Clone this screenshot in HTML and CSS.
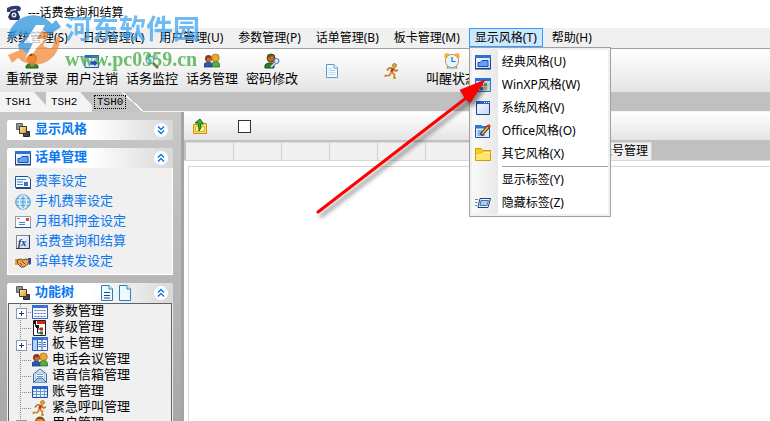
FILE: index.html
```html
<!DOCTYPE html>
<html lang="zh-CN">
<head>
<meta charset="utf-8">
<meta name="viewport" content="width=device-width, initial-scale=1.0">
<title>话费查询和结算</title>
<link rel="stylesheet" href="styles.css">
</head>
<body>
<!-- icons -->
<svg class="sprite" aria-hidden="true">
  <defs>
    <linearGradient id="gWin" x1="0" y1="0" x2="1" y2="1"><stop offset="0" stop-color="#fff"/><stop offset="1" stop-color="#c3d3f0"/></linearGradient>
    <linearGradient id="gGold" x1="0" y1="0" x2="1" y2="1"><stop offset="0" stop-color="#fff0b0"/><stop offset="1" stop-color="#d8932a"/></linearGradient>
  </defs>
  <symbol id="i-phone" viewBox="0 0 16 16">
    <path d="M1 3Q6 0 13 1L15 3L14 6L11 6L10 4L5 5L4 7L1 7Z" fill="#2f3c70"/>
    <path d="M5 6L11 5L14 12L13 15L4 15L2 12Z" fill="#26305c"/>
    <circle cx="8" cy="10" r="2.5" fill="#dde4f4"/><circle cx="8" cy="10" r="1" fill="#26305c"/>
  </symbol>
  <symbol id="i-person" viewBox="0 0 16 16">
    <path d="M2 15V13Q4 11 6 10H10Q12 11 14 13V15Z" fill="#2f8f2c" stroke="#176018"/>
    <path d="M6 9H10V12L8 14L6 12Z" fill="#c8781a"/>
    <circle cx="8" cy="5.5" r="4.5" fill="#d98c23" stroke="#8b4a0a"/>
    <path d="M4 5Q4 1 8 1Q12 1 12 5L10 3L5 3Z" fill="#8b4a0a"/>
  </symbol>
  <symbol id="i-logout" viewBox="0 0 16 16">
    <path d="M1 2.5H14.500V14.500H1Z" fill="url(#gWin)" stroke="#2457a8"/>
    <path d="M1 2H15V5H1Z" fill="#2f62c4"/>
    <path d="M6 8H10V6L14 10L10 14V12H6Z" fill="#1f4fc0" stroke="#fff" stroke-width=".5"/>
  </symbol>
  <symbol id="i-monitor" viewBox="0 0 16 16">
    <circle cx="4.500" cy="4" r="3" fill="#7ec46d"/><circle cx="11" cy="4" r="3" fill="#b4cdb9"/>
    <circle cx="6" cy="7" r="4" fill="#cfe6f8" stroke="#6d9cc2"/>
    <path d="M9 10L14 15" stroke="#7a6a5a" stroke-width="2.500"/>
  </symbol>
  <symbol id="i-users" viewBox="0 0 16 16">
    <path d="M0 14V11Q2 9 4.500 9Q7 9 8 11V14Z" fill="#2d56b8" stroke="#16306e" stroke-width=".7"/>
    <circle cx="4.500" cy="5.500" r="3.500" fill="#8c3b1c"/><path d="M3 5H7V8L5 9L3 8Z" fill="#bd6a35"/>
    <path d="M8 14V10Q10 8 12 8Q15 9 15.500 11V14Z" fill="#4fb04a" stroke="#1d6b1f" stroke-width=".7"/>
    <circle cx="11.500" cy="4.800" r="3.800" fill="#eaa832" stroke="#a4690c" stroke-width=".7"/>
  </symbol>
  <symbol id="i-key" viewBox="0 0 16 16">
    <path d="M1 15V12Q3 10 5 10H10V15Z" fill="#2e7d2a" stroke="#155016"/>
    <circle cx="7" cy="5" r="4" fill="#b86d1f" stroke="#6a3a0a"/>
    <path d="M3 5Q3 1 7 1Q11 1 11 4L8 3Z" fill="#59571b"/>
    <circle cx="12.500" cy="8" r="2.500" fill="#d9e9fb" stroke="#44699c"/>
    <path d="M11 10L7 14" stroke="#44699c" stroke-width="3"/><path d="M11 10L7 14" stroke="#d9e9fb" stroke-width="1.500"/>
  </symbol>
  <symbol id="i-page" viewBox="0 0 16 16">
    <path d="M2.500 1.500H10L13.500 5V14.500H2.500Z" fill="#f2f9ff" stroke="#5b9bd5"/>
    <path d="M10 1.500V5H13.500" fill="#fff" stroke="#5b9bd5"/>
    <path d="M4.500 5.500H8M4.500 7.500H11.500M4.500 9.500H11.500M4.500 11.500H11.500" stroke="#bcd6ec"/>
  </symbol>
  <symbol id="i-run" viewBox="0 0 16 16">
    <circle cx="10.500" cy="2.500" r="2" fill="#e9a43a" stroke="#8f5200" stroke-width=".6"/>
    <path d="M9 5L7.500 9" stroke="#d32d1f" stroke-width="3"/>
    <path d="M8 5H5L3 7.500M9.500 5.500L11.500 8L14 7" stroke="#b87410" stroke-width="1.500" fill="none"/>
    <path d="M7.500 9L10.500 11.500L10 15H12M7 9.500L5.500 12.500L1.500 12.500V14" stroke="#c98718" stroke-width="1.700" fill="none"/>
  </symbol>
  <symbol id="i-clock" viewBox="0 0 16 16">
    <circle cx="3" cy="3" r="2.700" fill="#f7b02d"/><circle cx="13" cy="3" r="2.700" fill="#f7b02d"/>
    <path d="M3 15L5 12M13 15L11 12" stroke="#c77b16" stroke-width="1.500"/>
    <circle cx="8" cy="8" r="6.600" fill="#e6f4ff" stroke="#e08c42"/>
    <path d="M8 4V8.500H11.500" fill="none" stroke="#1677b8" stroke-width="1.200"/>
    <path d="M3 15H13" stroke="#5fb0e0"/>
  </symbol>
  <symbol id="i-classic" viewBox="0 0 16 16">
    <path d="M.5 1.500H15.500V14.500H.5Z" fill="url(#gWin)" stroke="#1d4690"/>
    <path d="M0 1H16V4H0Z" fill="#2e6fd8"/>
    <path d="M3 12.500V8.500H5L7 6.500H13V12.500Z" fill="#5aa4f2" stroke="#1553b6"/>
    <path d="M0 15H16" stroke="#16345f"/>
  </symbol>
  <symbol id="i-winxp" viewBox="0 0 16 16">
    <path d="M.5 1.500H15.500V14.500H.5Z" fill="#c6daf5" stroke="#2e6fd8"/>
    <path d="M0 1H16V4H0Z" fill="#2e6fd8"/>
    <path d="M5 6H8V9H5Z" fill="#e5502a"/><path d="M9 6H12V9H9Z" fill="#5eae34"/>
    <path d="M5 10H8V13H5Z" fill="#3f73cf"/><path d="M9 10H12V13H9Z" fill="#f0bd26"/>
  </symbol>
  <symbol id="i-window" viewBox="0 0 16 16">
    <path d="M1.500 1.500H14.500V14.500H1.500Z" fill="url(#gWin)" stroke="#1d4690"/>
    <path d="M1 1H15V4H1Z" fill="#2a5fc4"/><path d="M9 2.500H10M11 2.500H12M13 2.500H14" stroke="#fff"/>
  </symbol>
  <symbol id="i-office" viewBox="0 0 16 16">
    <path d="M.5 2.500H6L7 4H14.500V14.500H.5Z" fill="#dcebfb" stroke="#1c58a4"/>
    <path d="M0 2H6L7 3H15V5.500H0Z" fill="#2d78cc"/>
    <path d="M2.500 8H9M2.500 10H7M2.500 12H10" stroke="#2d78cc"/>
    <path d="M6 12L14 3" stroke="#47301a" stroke-width="3.400"/><path d="M7 11L13 4" stroke="#f7bf2e" stroke-width="1.800"/><path d="M13 4L15 2" stroke="#d83a24" stroke-width="3"/>
  </symbol>
  <symbol id="i-folder" viewBox="0 0 16 16">
    <path d="M.5 2.500H6L8 4.500H15.500V14.500H.5Z" fill="#f9c928" stroke="#d69a0e"/>
    <path d="M1 9.500L7 8.500L9 6.500H15V14H1Z" fill="#ffe567"/>
    <path d="M1 9.500L7 8.500L9 6.500H15" fill="none" stroke="#fff6b8"/>
  </symbol>
  <symbol id="i-hide" viewBox="0 0 16 16">
    <path d="M5 3.500H15.500L13 12.500H3Z" fill="#f4f8ff" stroke="#1f3f77"/>
    <path d="M6 5.500H13.500L12 10.500H5Z" fill="#a5cdf5" stroke="#46719f"/>
    <path d="M0 4.500H3M0 7.500H2.500M0 10.500H2" stroke="#69829f"/>
  </symbol>
  <symbol id="i-stack" viewBox="0 0 16 16">
    <path d="M1.500 1.500H7.500V7.500H1.500Z" fill="#8d95a3" stroke="#59606c"/>
    <path d="M8.500 9.500H14.500V14.500H8.500Z" fill="#3f4550" stroke="#23272f"/>
    <path d="M4.500 4.500H11.500V11.500H4.500Z" fill="url(#gGold)" stroke="#4a3517"/>
  </symbol>
  <symbol id="i-card" viewBox="0 0 16 16">
    <path d="M.5 2.500H13L15.500 5V13.500H.5Z" fill="#f4f9ff" stroke="#245089"/>
    <path d="M2 5.500H11M2 8H8M2 10.500H8" stroke="#3b86d6"/><path d="M9 8H13V12H9Z" fill="#3a71c4"/>
    <path d="M1 14.500H16" stroke="#3c4656"/>
  </symbol>
  <symbol id="i-globe" viewBox="0 0 16 16">
    <circle cx="8" cy="8" r="7.300" fill="#b6dcf5" stroke="#4f99cf"/>
    <path d="M8 1V15M1 8H15M2 4.500H14M2 11.500H14" stroke="#4f99cf" stroke-width=".8"/>
    <ellipse cx="8" cy="8" rx="3.500" ry="7" fill="none" stroke="#fff"/>
  </symbol>
  <symbol id="i-mail" viewBox="0 0 16 16">
    <path d="M.5 2.500H15.500V13.500H.5Z" fill="#fdfdff" stroke="#8f9cb5"/>
    <path d="M0 13.500H16" stroke="#2c4c80"/><path d="M11 4H14V7H11Z" fill="#df4a25"/>
    <path d="M2 4.500H5" stroke="#e26a4a"/><path d="M4 8.500H10M4 10.500H10" stroke="#3b86d6"/>
  </symbol>
  <symbol id="i-hands" viewBox="0 0 16 16">
    <path d="M0 5L3 5L5 11L0 11Z" fill="#e8a53c"/><path d="M13 4H16V10L14 11Z" fill="#2548b8"/>
    <path d="M2 6L6 5L8 6L11 5L14 6L13 10L9 13H6L3 10Z" fill="#e6a65a" stroke="#83450f"/>
    <path d="M7 7L10 10M5 9L7 11" stroke="#83450f"/>
  </symbol>
  <symbol id="i-doc" viewBox="0 0 14 18">
    <path d="M1.500 1.500H9L12.500 5V16.500H1.500Z" fill="#eef8ff" stroke="#2b80b8"/>
    <path d="M9 1.500V5H12.500" fill="#fff" stroke="#2b80b8"/>
    <path d="M4 8.500H10M4 11.500H10M4 14H10" stroke="#174d7d"/>
  </symbol>
  <symbol id="i-blank" viewBox="0 0 14 18">
    <path d="M1.500 1.500H9L12.500 5V16.500H1.500Z" fill="#eef8ff" stroke="#2b80b8"/>
    <path d="M9 1.500V5H12.500" fill="#fff" stroke="#2b80b8"/>
  </symbol>
  <symbol id="i-up" viewBox="0 0 14 14">
    <circle cx="7" cy="7" r="7" fill="#fff"/>
    <path d="M4 6.500L7 3.500L10 6.500M4 10.500L7 7.500L10 10.500" fill="none" stroke="#0a74e8" stroke-width="1.400"/>
  </symbol>
  <symbol id="i-down" viewBox="0 0 14 14">
    <circle cx="7" cy="7" r="7" fill="#fff"/>
    <path d="M4 3.500L7 6.500L10 3.500M4 7.500L7 10.500L10 7.500" fill="none" stroke="#0a74e8" stroke-width="1.400"/>
  </symbol>
  <symbol id="i-grid" viewBox="0 0 16 16">
    <path d="M.5 1.500H15.500V14.500H.5Z" fill="#f4f8ff" stroke="#2a5db0"/><path d="M0 1H16V4H0Z" fill="#2e6fd8"/><path d="M12 2.500H14" stroke="#f2683a"/>
    <path d="M2.500 6.500H14M2.500 9.500H14M2.500 12.500H14" stroke="#5c6fae" stroke-dasharray="2 1"/>
  </symbol>
  <symbol id="i-level" viewBox="0 0 16 16">
    <path d="M1.500 .5H13.500V15.500H1.500Z" fill="#fff" stroke="#222"/><path d="M5 1H13V4H5Z" fill="#e2231a"/>
    <path d="M3.500 2V6.500H7M5.500 6.500V13H9M5.500 9H9" stroke="#111" fill="none"/>
    <path d="M1 1H4V4H1Z M4 5H7V8H4Z" fill="#111"/><path d="M8 7.500H11V10.500H8Z" fill="#c2201a"/><path d="M8 11.500H11V14.500H8Z" fill="#1e7c2c"/>
  </symbol>
  <symbol id="i-board" viewBox="0 0 16 16">
    <path d="M.5 1.500H15.500V14.500H.5Z" fill="#f4f8ff" stroke="#2a5db0"/><path d="M0 1H16V4H0Z" fill="#2e6fd8"/><path d="M12 2.500H14" stroke="#f2683a"/>
    <path d="M1 4H5V14H1Z" fill="#b4d2f5"/><path d="M5.500 4V14M10 4V14" stroke="#2a5db0"/>
    <path d="M6.500 6.500H9M6.500 8.500H9M6.500 10.500H9M11 6.500H14M11 8.500H14M11 10.500H14" stroke="#467bc4"/>
  </symbol>
  <symbol id="i-letter" viewBox="0 0 16 16">
    <path d="M1.500 6L8 1L14.500 6V14.500H1.500Z" fill="#cfe2f5" stroke="#4a6f9d"/>
    <path d="M4 5H12V11H4Z" fill="#fff" stroke="#8ca6c4" stroke-width=".6"/><path d="M5 6.500H11M5 8.500H11" stroke="#5b9bd5"/>
    <path d="M1.500 14.500L6 10H10L14.500 14.500" fill="#a5c6e8" stroke="#4a6f9d"/>
  </symbol>
  <symbol id="i-table" viewBox="0 0 16 16">
    <path d="M.5 2.500H15.500V13.500H.5Z" fill="#e8f1fd" stroke="#1d4a94"/><path d="M0 2H16V5H0Z" fill="#2763c6"/>
    <path d="M4.500 5V13M8.500 5V13M12.500 5V13M1 7.500H15M1 10.500H15" stroke="#6d97d4"/>
  </symbol>
  <symbol id="i-export" viewBox="0 0 16 16">
    <path d="M1.500 6.500H6L7 5.500H14.500V15.500H1.500Z" fill="#fbe36b" stroke="#c4930f"/><path d="M3.500 8.500H12.500V13.500H3.500Z" fill="#fff09b" stroke="#dcae2c"/>
    <path d="M7 13Q10 10 8.500 6H11.500L8 1L3 5H6Q7 9 7 13Z" fill="#35b52c" stroke="#146d15"/>
  </symbol>
</svg>

<header class="titlebar">
  <svg class="icon"><use href="#i-phone"/></svg>
  <span>---话费查询和结算</span>
</header>

<nav class="menubar">
  <button class="menu">系统管理(S)</button>
  <button class="menu">日志管理(L)</button>
  <button class="menu">用户管理(U)</button>
  <button class="menu">参数管理(P)</button>
  <button class="menu">话单管理(B)</button>
  <button class="menu">板卡管理(M)</button>
  <div class="menu-open">
    <button class="menu active" aria-expanded="true">显示风格(T)</button>
    <div class="dropdown">
      <button class="option"><svg class="icon"><use href="#i-classic"/></svg>经典风格(U)</button>
      <button class="option"><svg class="icon"><use href="#i-winxp"/></svg>WinXP风格(W)</button>
      <button class="option"><svg class="icon"><use href="#i-window"/></svg>系统风格(V)</button>
      <button class="option"><svg class="icon"><use href="#i-office"/></svg>Office风格(O)</button>
      <button class="option"><svg class="icon"><use href="#i-folder"/></svg>其它风格(X)</button>
      <hr>
      <button class="option"><svg class="icon"></svg>显示标签(Y)</button>
      <button class="option"><svg class="icon"><use href="#i-hide"/></svg>隐藏标签(Z)</button>
    </div>
  </div>
  <button class="menu">帮助(H)</button>
</nav>

<div class="toolbar">
  <button class="tool"><svg class="icon"><use href="#i-person"/></svg>重新登录</button>
  <button class="tool"><svg class="icon"><use href="#i-logout"/></svg>用户注销</button>
  <button class="tool"><svg class="icon"><use href="#i-monitor"/></svg>话务监控</button>
  <button class="tool"><svg class="icon"><use href="#i-users"/></svg>话务管理</button>
  <button class="tool"><svg class="icon"><use href="#i-key"/></svg>密码修改</button>
  <button class="tool" aria-label="文档"><svg class="icon"><use href="#i-page"/></svg></button>
  <button class="tool" aria-label="退出"><svg class="icon"><use href="#i-run"/></svg></button>
  <button class="tool"><svg class="icon"><use href="#i-clock"/></svg>叫醒状态</button>
</div>

<div class="tabs">
  <button class="tab">TSH1</button>
  <button class="tab">TSH2</button>
  <button class="tab selected"><span>TSH0</span></button>
</div>

<div class="workspace">
  <aside class="sidebar">
    <section class="panel">
      <h2 class="panel-head"><svg class="icon"><use href="#i-stack"/></svg>显示风格
        <button class="fold" aria-label="展开"><svg><use href="#i-down"/></svg></button></h2>
    </section>
    <section class="panel">
      <h2 class="panel-head"><svg class="icon"><use href="#i-classic"/></svg>话单管理
        <button class="fold" aria-label="收起"><svg><use href="#i-up"/></svg></button></h2>
      <div class="links">
        <a href="#"><svg class="icon"><use href="#i-card"/></svg>费率设定</a>
        <a href="#"><svg class="icon"><use href="#i-globe"/></svg>手机费率设定</a>
        <a href="#"><svg class="icon"><use href="#i-mail"/></svg>月租和押金设定</a>
        <a href="#"><svg class="icon" viewBox="0 0 16 16">
          <path d="M1.500 1.500H14.500V14.500H1.500Z" fill="url(#gWin)" stroke="#7a8494"/><path d="M1 14.500H15M14.500 1V15" stroke="#2b3a55"/>
          <text x="3" y="12" class="fx">fx</text>
        </svg>话费查询和结算</a>
        <a href="#"><svg class="icon"><use href="#i-hands"/></svg>话单转发设定</a>
      </div>
    </section>
    <section class="panel">
      <h2 class="panel-head"><svg class="icon"><use href="#i-stack"/></svg>功能树
        <span class="docs"><svg><use href="#i-doc"/></svg><svg><use href="#i-blank"/></svg></span>
        <button class="fold" aria-label="收起"><svg><use href="#i-up"/></svg></button></h2>
      <ul class="tree">
        <li class="parent"><svg class="icon"><use href="#i-grid"/></svg>参数管理</li>
        <li><svg class="icon"><use href="#i-level"/></svg>等级管理</li>
        <li class="parent"><svg class="icon"><use href="#i-board"/></svg>板卡管理</li>
        <li><svg class="icon"><use href="#i-users"/></svg>电话会议管理</li>
        <li><svg class="icon"><use href="#i-letter"/></svg>语音信箱管理</li>
        <li><svg class="icon"><use href="#i-table"/></svg>账号管理</li>
        <li><svg class="icon"><use href="#i-run"/></svg>紧急呼叫管理</li>
        <li class="parent"><svg class="icon"><use href="#i-person"/></svg>用户管理</li>
      </ul>
    </section>
  </aside>
  <main class="content">
    <div class="content-bar">
      <button class="export" aria-label="导出"><svg class="icon"><use href="#i-export"/></svg></button>
      <input type="checkbox" class="check" aria-label="选择">
    </div>
    <div class="page-tabs">
      <span></span><span></span><span></span><span></span><span></span><span></span><span></span><span></span>
      <span class="last">账号管理</span>
    </div>
    <div class="page"></div>
  </main>
</div>

<!-- watermark -->
<div class="watermark">
  <svg class="mark" viewBox="0 0 60 52">
    <path d="M3 26A25 25 0 0 1 47 9L51 5L56 12L44 20L36 13L28 25L31 31L17 44L13 30L21 20L15 19Z" fill="#2a93dc"/>
    <path d="M54 18A25 25 0 0 1 13 43L7 48L3 40L17 34L26 42L34 29H26L36 15L44 19L38 31L46 34Z" fill="#f28a3c"/>
    <path d="M31 10L19 28H28L20 44L41 24H32L40 10Z" fill="#fff"/>
  </svg>
  <div>
    <div class="site-name">河东软件园</div>
    <div class="site-url">www.pc0359.cn</div>
  </div>
</div>

<svg class="arrow" viewBox="0 0 180 145" aria-hidden="true">
  <path d="M6 141L158 24" stroke="#f00" stroke-width="3" stroke-linecap="round"/>
  <path d="M173 9L148 19L153 27L158 32Z" fill="#f00" stroke="#c00" stroke-width=".6"/>
</svg>
</body>
</html>
```

FILE: styles.css
```css
:root {
  --face: #f0f0f0;
  --strip: #c0c0c0;
  --line: #a0a0a0;
  --link: #0a78f0;
  --ui: "Noto Sans", "Noto Sans CJK SC", sans-serif;
  --song: "Liberation Mono", "Noto Sans CJK SC", monospace;
}
* {
  box-sizing: border-box;
}
body {
  margin: 0;
  height: 100vh;
  overflow: hidden;
  display: flex;
  flex-direction: column;
  position: relative;
  background: #fff;
  color: #000;
  font: 12px/16px var(--ui);
}
button {
  margin: 0;
  padding: 0;
  border: none;
  background: none;
  color: inherit;
  font: inherit;
  white-space: nowrap;
}
.sprite {
  position: absolute;
  width: 0;
  height: 0;
}
.icon {
  width: 16px;
  height: 16px;
  flex: none;
}
.fx {
  font: italic bold 10px "Liberation Serif", serif;
  fill: #14306e;
}

/* title + menu */
.titlebar {
  flex: none;
  height: 28px;
  padding: 0 6px 2px;
  display: flex;
  align-items: center;
  gap: 6px;
}
.menubar {
  flex: none;
  height: 21px;
  padding-bottom: 1px;
  display: flex;
  background: var(--face);
  border-bottom: 1px solid var(--line);
}
.menu {
  height: 19px;
  padding: 0 5px;
  margin-right: 3px;
  border: 1px solid transparent;
}
.menu.active {
  background: #cce8ff;
  border-color: #3399ff;
}
.menu-open {
  position: relative;
}
.dropdown {
  position: absolute;
  z-index: 10;
  top: 19px;
  left: 0;
  width: 142px;
  padding: 2px;
  border: 1px solid var(--line);
  background: linear-gradient(90deg, #fafafa, #e8e8e8 26px, #fff 26px) content-box, var(--face);
}
.option {
  display: flex;
  align-items: center;
  gap: 11px;
  width: 100%;
  height: 23px;
  padding-left: 3px;
}
.dropdown hr {
  margin: 1px 0 1px 30px;
  border: none;
  border-top: 1px solid var(--line);
}

/* toolbar */
.toolbar {
  flex: none;
  height: 43px;
  padding: 3px 2px;
  display: flex;
  background: linear-gradient(#fff, #e4e4e4);
}
.tool {
  width: 60px;
  display: flex;
  flex-direction: column;
  align-items: center;
  justify-content: center;
  gap: 2px;
  font: 13px/18px var(--song);
}

/* tabs */
.tabs {
  flex: none;
  height: 20px;
  display: flex;
  background: var(--strip);
  border-bottom: 1px solid #f4f4f4;
}
.tab {
  width: 52px;
  height: 20px;
  margin-right: -6px;
  padding-left: 5px;
  text-align: left;
  background: #f4f4f4;
  clip-path: polygon(0 0, 34px 0, 100% 100%, 0 100%);
  font: 11px/20px var(--song);
}
.tab.selected {
  padding-left: 2px;
  background: #c4c4c4;
  clip-path: none;
  position: relative;
}
.tab.selected::after {
  content: "";
  position: absolute;
  right: 0;
  top: 0;
  width: 22px;
  height: 20px;
  background: linear-gradient(to top right, transparent 48%, #fff 48%, #fff 52%, var(--strip) 52%);
}
.tab.selected span {
  position: relative;
  z-index: 1;
  display: inline-block;
  line-height: 12px;
  padding: 0 2px;
  border: 1px dotted #000;
}

/* left side */
.workspace {
  flex: 1;
  min-height: 0;
  display: flex;
}
.sidebar {
  flex: none;
  width: 184px;
  padding: 8px 8px 0 7px;
  overflow: hidden;
  background: linear-gradient(#c8c8c8, #a8a8a8);
  border-right: 3px solid #a4a4a4;
}
.panel {
  margin-bottom: 8px;
  background: var(--face);
  border-radius: 3px 3px 0 0;
}
.panel-head {
  height: 20px;
  margin: 0;
  padding: 0 5px 0 8px;
  display: flex;
  align-items: center;
  gap: 4px;
  border-radius: 3px 3px 0 0;
  background: linear-gradient(90deg, #fff 50%, #d8d8d8);
  color: var(--link);
  font: bold 13px/20px var(--song);
}
.fold {
  width: 14px;
  height: 14px;
  margin-left: auto;
}
.fold svg {
  display: block;
  width: 14px;
  height: 14px;
}
.docs {
  display: flex;
  gap: 4px;
  margin-left: 22px;
}
.docs svg {
  width: 14px;
  height: 18px;
}
.links {
  padding: 4px 0 2px;
  border: 1px solid #fff;
  border-top: none;
}
.links a {
  display: flex;
  align-items: center;
  gap: 4px;
  height: 20px;
  padding-left: 7px;
  color: var(--link);
  text-decoration: none;
  font: 13px/20px var(--song);
}
.tree {
  list-style: none;
  margin: 0 1px;
  padding: 0 0 0 11px;
  border: 1px solid #606060;
}
.tree li {
  position: relative;
  display: flex;
  align-items: center;
  gap: 4px;
  height: 16px;
  padding-left: 12px;
  font: 13px/16px var(--song);
  background:
    repeating-linear-gradient(90deg, #888 0 1px, transparent 1px 2px) 0 8px / 11px 1px no-repeat,
    repeating-linear-gradient(#888 0 1px, transparent 1px 2px) 0 0 / 1px 16px no-repeat;
}
.tree .parent::before {
  content: "";
  position: absolute;
  left: -4px;
  top: 4px;
  width: 9px;
  height: 9px;
  border: 1px solid #8a9ab0;
  background:
    linear-gradient(#1a3f90, #1a3f90) center / 5px 1px no-repeat,
    linear-gradient(#1a3f90, #1a3f90) center / 1px 5px no-repeat,
    #fff;
}

/* right side */
.content {
  flex: 1;
  min-width: 0;
  display: flex;
  flex-direction: column;
}
.content-bar {
  flex: none;
  height: 28px;
  padding: 0 8px;
  display: flex;
  align-items: center;
  gap: 30px;
  background: linear-gradient(#fff, #e4e4e4);
}
.export {
  height: 16px;
}
.check {
  appearance: none;
  width: 13px;
  height: 13px;
  margin: 0;
  border: 1px solid #333;
  background: #fff;
}
.page-tabs {
  flex: none;
  height: 21px;
  padding: 2px 2px 0;
  display: flex;
  background: var(--strip);
  border-bottom: 1px solid #d8d8d8;
}
.page-tabs span {
  width: 48px;
  background: var(--face);
  border-top: 1px solid #dcdcdc;
  border-right: 1px solid #d0d0d0;
}
.page-tabs .last {
  width: 82px;
  padding-right: 3px;
  text-align: right;
}
.page {
  flex: 1;
  margin: 5px 0 0 4px;
  border: 1px solid #d8d8d8;
  border-width: 1px 0 0 1px;
}

/* overlays */
.watermark {
  position: absolute;
  z-index: 20;
  left: 5px;
  top: 12px;
  display: flex;
  opacity: .75;
  pointer-events: none;
}
.mark {
  width: 60px;
  height: 52px;
  margin-top: 3px;
}
.site-name {
  color: #3fa5f0;
  font: bold 27px/32px "Noto Sans CJK SC", sans-serif;
}
.site-url {
  color: #3faa3f;
  font: bold 20px/30px "Liberation Serif", serif;
}
.arrow {
  position: absolute;
  z-index: 20;
  left: 312px;
  top: 71px;
  width: 180px;
  height: 145px;
  pointer-events: none;
  filter: drop-shadow(3px 4px 2px rgba(0, 0, 0, .45));
}
```
